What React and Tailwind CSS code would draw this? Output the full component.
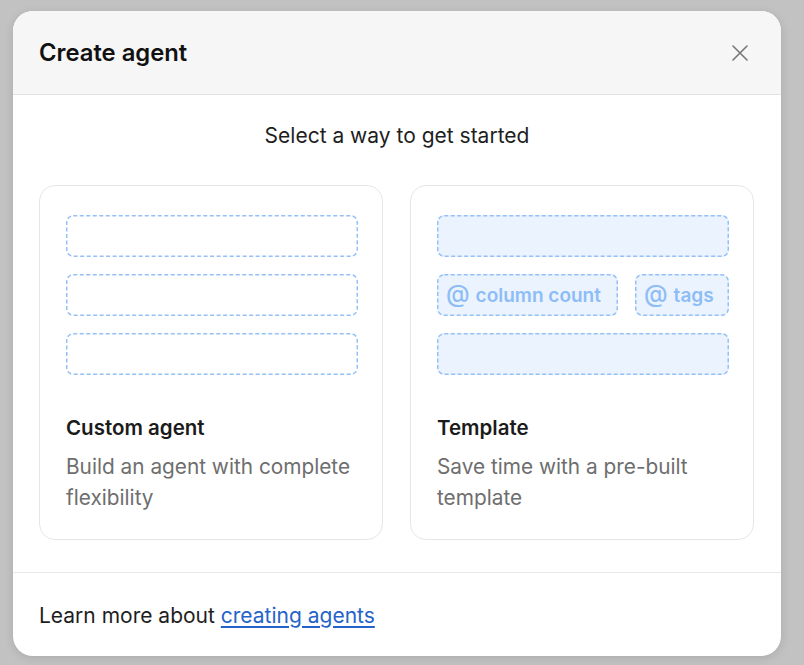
import React from "react";

function Box({ filled, className = "", children }) {
  return (
    <div
      className={
        "relative h-[42px] rounded-[7px] flex items-center " +
        (filled ? "bg-[#ebf3fe] " : "bg-white ") +
        className
      }
    >
      <svg className="absolute inset-0 w-full h-full pointer-events-none overflow-visible">
        <rect
          x="0.75"
          y="0.75"
          rx="6.5"
          ry="6.5"
          fill="none"
          stroke="#94c0f6"
          strokeWidth="1.5"
          strokeDasharray="4 2.5"
          style={{ width: "calc(100% - 1.5px)", height: "calc(100% - 1.5px)" }}
        />
      </svg>
      {children}
    </div>
  );
}

function Mention({ label }) {
  return (
    <div className="relative flex items-center gap-[6px] pl-[9px] text-[#8dbdf6] font-semibold text-[19px] leading-none">
      <span className="text-[24px] leading-none font-medium relative top-[-1px]">@</span>
      <span>{label}</span>
    </div>
  );
}

function Card({ preview, title, desc }) {
  return (
    <div className="flex-1 rounded-[16px] border border-[#e6e6e6] bg-white pl-[26px] pr-[24px] pt-[29px] pb-[26px]">
      {preview}
      <div className="mt-[39px] text-[20.5px] leading-[28px] font-semibold text-[#1b1b1b]">{title}</div>
      <div className="mt-[9px] text-[20.8px] leading-[31px] text-[#6e6e6e]">{desc}</div>
    </div>
  );
}

export default function App() {
  return (
    <div
      className="w-[804px] h-[665px] bg-[#c2c2c2] pt-[11px] pl-[13px]"
      style={{ fontFamily: "Inter, 'Noto Sans', sans-serif" }}
    >
      <div className="w-[768px] h-[645px] bg-white rounded-[20px] overflow-hidden shadow-[0_2px_10px_rgba(0,0,0,0.12)] flex flex-col">
        <div className="h-[84px] shrink-0 bg-[#f6f6f6] border-b border-[#e2e2e2] flex items-center justify-between pl-[26px] pr-[32px]">
          <div className="text-[23.8px] font-semibold text-[#111]">Create agent</div>
          <svg width="18" height="18" viewBox="0 0 18 18" fill="none" stroke="#767676" strokeWidth="1.6" strokeLinecap="round">
            <path d="M2 2 L16 16 M16 2 L2 16" />
          </svg>
        </div>
        <div className="flex-1 border-b border-[#e8e8e8] px-[26px] pb-[32px]">
          <div className="pt-[27px] text-center text-[21px] leading-[28px] text-[#1e1e1e]">Select a way to get started</div>
          <div className="mt-[35px] flex gap-[27px] pr-[1px]">
            <Card
              title="Custom agent"
              desc={<>Build an agent with complete<br />flexibility</>}
              preview={
                <div className="flex flex-col gap-[17px]">
                  <Box />
                  <Box />
                  <Box />
                </div>
              }
            />
            <Card
              title="Template"
              desc={<>Save time with a pre-built<br />template</>}
              preview={
                <div className="flex flex-col gap-[17px]">
                  <Box filled />
                  <div className="flex gap-[17px]">
                    <Box filled className="w-[181px]">
                      <Mention label="column count" />
                    </Box>
                    <Box filled className="flex-1">
                      <Mention label="tags" />
                    </Box>
                  </div>
                  <Box filled />
                </div>
              }
            />
          </div>
        </div>
        <div className="h-[84px] shrink-0 flex items-center pl-[26px] pt-[1px] text-[21px] text-[#1e1e1e]">
          <span>
            Learn more about{" "}
            <a href="#" className="text-[#2463c9] underline underline-offset-[3px]">creating agents</a>
          </span>
        </div>
      </div>
    </div>
  );
}
